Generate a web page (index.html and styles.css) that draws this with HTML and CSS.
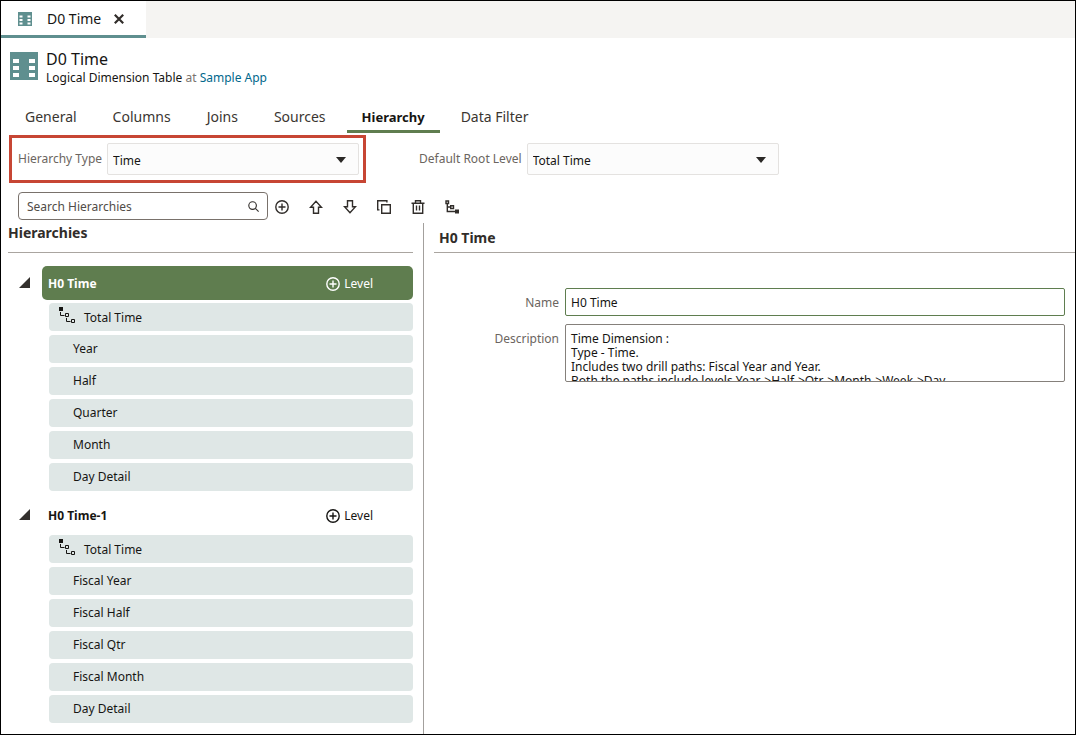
FILE: index.html
```html
<!DOCTYPE html>
<html lang="en">
<head>
    <meta charset="UTF-8">
    <meta name="viewport" content="width=device-width, initial-scale=1.0">
    <title>D0 Time</title>
    <link rel="stylesheet" href="styles.css">
</head>
<body>
    <!-- shared icons -->
    <svg class="sprite" aria-hidden="true">
        <symbol id="table" viewBox="0 0 28 28">
            <path fill="#5f8f8f" d="M0 0h28v28H0z"/>
            <path fill="#fff" d="M3 7h6v4H3zM3 14h6v4H3zM3 21h6v4H3zM19 7h6v4h-6zM19 14h6v4h-6zM19 21h6v4h-6z"/>
        </symbol>
        <symbol id="plus" viewBox="0 0 14 14">
            <path fill="none" stroke="currentColor" stroke-width="1.4" d="M7 .8a6.2 6.2 0 1 1 0 12.4A6.2 6.2 0 1 1 7 .8zM7 3.5v7M3.5 7h7"/>
        </symbol>
        <symbol id="levels" viewBox="0 0 17 17">
            <path fill="currentColor" d="M0 0h4v4H0z"/>
            <path fill="none" stroke="currentColor" d="M1.5 5v3.500h4M6.500 6.500h3v3h-3zM7.500 11v3.500h4M12.500 12.500h3v3h-3z"/>
        </symbol>
        <symbol id="arrow" viewBox="0 0 10 6">
            <path fill="#2b2927" d="M0 0h10L5 6z"/>
        </symbol>
        <symbol id="expanded" viewBox="0 0 11 11">
            <path fill="#33302d" d="M11 0v11H0z"/>
        </symbol>
    </svg>

    <div class="app">
        <div class="window-tabs">
            <div class="window-tab">
                <svg class="tab-icon"><use href="#table"/></svg>
                <span>D0 Time</span>
                <button class="close" aria-label="Close">
                    <svg width="10" height="10" viewBox="0 0 10 10"><path stroke="#312d2a" stroke-width="2.2" d="M.8.8l8.400 8.400M9.200.8L.8 9.200"/></svg>
                </button>
            </div>
        </div>

        <header class="header">
            <svg class="header-icon"><use href="#table"/></svg>
            <div>
                <h1>D0 Time</h1>
                <p>Logical Dimension Table <span class="at">at</span> <a href="#">Sample App</a></p>
            </div>
        </header>

        <nav class="tabs">
            <a href="#">General</a>
            <a href="#">Columns</a>
            <a href="#">Joins</a>
            <a href="#">Sources</a>
            <a href="#" class="active">Hierarchy</a>
            <a href="#">Data Filter</a>
        </nav>

        <div class="options">
            <div class="option highlight">
                <label for="type">Hierarchy Type</label>
                <span class="select">
                    <select id="type"><option>Time</option></select>
                    <svg><use href="#arrow"/></svg>
                </span>
            </div>
            <div class="option">
                <label for="root">Default Root Level</label>
                <span class="select">
                    <select id="root"><option>Total Time</option></select>
                    <svg><use href="#arrow"/></svg>
                </span>
            </div>
        </div>

        <div class="toolbar">
            <div class="search">
                <input type="text" placeholder="Search Hierarchies" aria-label="Search Hierarchies">
                <svg width="11" height="11" viewBox="0 0 11 11" fill="none" stroke="#312d2a" stroke-width="1.1"><circle cx="4.600" cy="4.600" r="3.800"/><path d="M7.400 7.400l3.200 3.200"/></svg>
            </div>
            <button aria-label="Add"><svg width="14" height="14"><use href="#plus"/></svg></button>
            <button aria-label="Move Up">
                <svg width="14" height="14" viewBox="0 0 14 14"><path d="M7 1.200L1.500 7.300h3v5.900h5V7.300h3z"/></svg>
            </button>
            <button aria-label="Move Down">
                <svg width="14" height="14" viewBox="0 0 14 14"><path d="M7 12.800L1.500 6.700h3V.8h5v5.900h3z"/></svg>
            </button>
            <button aria-label="Duplicate">
                <svg width="14" height="14" viewBox="0 0 14 14"><path d="M4.700 4.700h8.600v8.600H4.700zM2.500 9.900H.7V.7h9.200v1.800"/></svg>
            </button>
            <button aria-label="Delete">
                <svg width="14" height="14" viewBox="0 0 14 14"><path d="M.5 3.200h13M4.500 3V.8h5V3M2.300 3.500v9.800h9.400V3.500M5.500 5.500v5M8.500 5.500v5"/></svg>
            </button>
            <button aria-label="Set Root Level">
                <svg width="14" height="14" viewBox="0 0 14 14"><path d="M1 1h2.500v2.500H1zM2.300 4v7.500H10M2.300 7H6M5.700 5.700h2.800v2.800H5.700z"/><path fill="currentColor" d="M10.700 10.200h2.600v2.600h-2.600z"/></svg>
            </button>
        </div>

        <main class="content">
            <section class="hierarchies">
                <h2>Hierarchies</h2>
                <div class="group">
                    <svg class="expand"><use href="#expanded"/></svg>
                    <div class="group-title selected">
                        <span>H0 Time</span>
                        <button class="add-level"><svg width="14" height="14"><use href="#plus"/></svg>Level</button>
                    </div>
                    <ul>
                        <li class="root"><svg><use href="#levels"/></svg>Total Time</li>
                        <li>Year</li>
                        <li>Half</li>
                        <li>Quarter</li>
                        <li>Month</li>
                        <li>Day Detail</li>
                    </ul>
                </div>
                <div class="group">
                    <svg class="expand"><use href="#expanded"/></svg>
                    <div class="group-title">
                        <span>H0 Time-1</span>
                        <button class="add-level"><svg width="14" height="14"><use href="#plus"/></svg>Level</button>
                    </div>
                    <ul>
                        <li class="root"><svg><use href="#levels"/></svg>Total Time</li>
                        <li>Fiscal Year</li>
                        <li>Fiscal Half</li>
                        <li>Fiscal Qtr</li>
                        <li>Fiscal Month</li>
                        <li>Day Detail</li>
                    </ul>
                </div>
            </section>

            <section class="details">
                <h2>H0 Time</h2>
                <form>
                    <label for="name">Name</label>
                    <input type="text" id="name" value="H0 Time">
                    <label for="description">Description</label>
                    <textarea id="description">Time Dimension :
Type - Time.
Includes two drill paths: Fiscal Year and Year.
Both the paths include levels Year->Half->Qtr->Month->Week->Day</textarea>
                </form>
            </section>
        </main>
    </div>
</body>
</html>
```
FILE: styles.css
```css
* {
    box-sizing: border-box;
}

body {
    margin: 0;
    font-family: "Noto Sans", sans-serif;
    font-size: 12px;
    line-height: 16px;
    color: #161513;
    background-color: #fff;
}

h1, h2, p, ul {
    margin: 0;
    padding: 0;
}

input, select, textarea, button {
    font: inherit;
    color: inherit;
    margin: 0;
}

button {
    padding: 0;
    border: none;
    background: none;
    cursor: pointer;
}

svg {
    display: block;
    flex: none;
}

.sprite {
    position: absolute;
    width: 0;
    height: 0;
}

.app {
    display: flex;
    flex-direction: column;
    min-height: 100vh;
    border: 1px solid #000;
}

.window-tabs {
    display: flex;
    background-color: #f5f4f2;
}

.window-tab {
    display: flex;
    align-items: center;
    height: 37px;
    padding: 2px 22px 0 17px;
    font-size: 14px;
    background-color: #fff;
    border-bottom: 3px solid #5f8f8f;
}

.tab-icon {
    width: 14px;
    height: 14px;
    margin-right: 15px;
}

.close {
    margin-left: 13px;
}

.header {
    display: flex;
    gap: 8px;
    padding: 11px 9px 0;
}

.header-icon {
    width: 28px;
    height: 28px;
    margin-top: 3px;
}

h1 {
    font-size: 16px;
    font-weight: normal;
    line-height: 21px;
}

.at {
    color: #7a736e;
}

.header a {
    color: #00688c;
    text-decoration: none;
}

.tabs {
    display: flex;
    gap: 6px;
    padding: 16px 9px 0;
}

.tabs a {
    padding: 6px 15px 4px;
    font-size: 14px;
    line-height: 18px;
    color: #3a3631;
    text-decoration: none;
    border-bottom: 3px solid transparent;
}

.tabs .active {
    font-size: 13px;
    color: #161513;
    font-weight: bold;
    border-color: #5f7d4f;
}

.options {
    display: flex;
    align-items: center;
    gap: 44px;
    padding: 2px 8px 0;
}

.option {
    display: flex;
    align-items: center;
    gap: 5px;
    padding: 5px 4px 5px 6px;
    color: #6b6560;
    border: 3px solid transparent;
}

.highlight {
    border-color: #c74634;
}

.select {
    position: relative;
}

.select select {
    display: block;
    appearance: none;
    width: 252px;
    height: 32px;
    padding: 4px 5px 0;
    color: #161513;
    background-color: #fcfcfc;
    border: 1px solid #e4e2e0;
    border-radius: 2px;
}

.select svg {
    position: absolute;
    top: 14px;
    right: 13px;
    width: 10px;
    height: 6px;
    pointer-events: none;
}

.toolbar {
    display: flex;
    align-items: center;
    gap: 20px;
    padding: 9px 17px 3px;
    color: #312d2a;
}

.search {
    position: relative;
    margin-right: -13px;
}

.search input {
    display: block;
    width: 250px;
    height: 28px;
    padding: 0 28px 0 8px;
    background-color: #fff;
    border: 1px solid #79716b;
    border-radius: 4px;
}

.search input::placeholder {
    color: #514c47;
    opacity: 1;
}

.search svg {
    position: absolute;
    top: 9px;
    right: 9px;
}

.toolbar button {
    padding-top: 2px;
}

.toolbar button svg {
    fill: none;
    stroke: currentColor;
    stroke-width: 1.4;
}

.content {
    display: flex;
    flex: 1;
}

.hierarchies {
    width: 423px;
    padding: 0 10px 11px 7px;
    border-right: 1px solid #a3a09d;
}

h2 {
    font-size: 14px;
    line-height: 18px;
    color: #312d2a;
}

.hierarchies h2 {
    padding: 1px 0 10px;
    margin-bottom: 13px;
    border-bottom: 1px solid #aaa5a0;
}

.group {
    display: grid;
    grid-template-columns: 34px 1fr;
    row-gap: 3px;
    align-items: center;
    margin-bottom: 7px;
}

.group:last-child {
    margin-bottom: 0;
}

.expand {
    width: 11px;
    height: 11px;
    margin: 0 0 2px 11px;
}

.group-title {
    display: flex;
    align-items: center;
    justify-content: space-between;
    height: 34px;
    padding: 1px 40px 0 6px;
    font-weight: bold;
    border-radius: 5px;
}

.selected {
    color: #fff;
    background-color: #5f7d4f;
}

.add-level {
    display: flex;
    align-items: center;
    gap: 4px;
    font-weight: normal;
}

.group ul {
    grid-column: 2;
    display: flex;
    flex-direction: column;
    gap: 4px;
    margin-left: 7px;
    list-style: none;
}

.group li {
    display: flex;
    align-items: center;
    height: 28px;
    padding-left: 24px;
    background-color: #dfe7e6;
    border-radius: 4px;
}

.group .root {
    gap: 8px;
    padding: 1px 0 0 10px;
}

.root svg {
    width: 17px;
    height: 17px;
    margin-bottom: 4px;
}

.details {
    flex: 1;
    padding-left: 10px;
}

.details h2 {
    padding: 6px 5px 5px;
    border-bottom: 1px solid #aaa5a0;
}

.details form {
    display: grid;
    grid-template-columns: 125px 1fr;
    gap: 8px 6px;
    padding: 35px 10px 0 0;
}

.details label {
    padding-top: 7px;
    text-align: right;
    color: #6b6560;
}

.details input,
.details textarea {
    display: block;
    width: 100%;
    height: 28px;
    padding: 0 5px;
    background-color: #fff;
    border: 1px solid #5f7d4f;
    border-radius: 2px;
}

.details textarea {
    height: 58px;
    padding-top: 7px;
    line-height: 14px;
    border-color: #85807b;
    resize: none;
    overflow: hidden;
}
```
